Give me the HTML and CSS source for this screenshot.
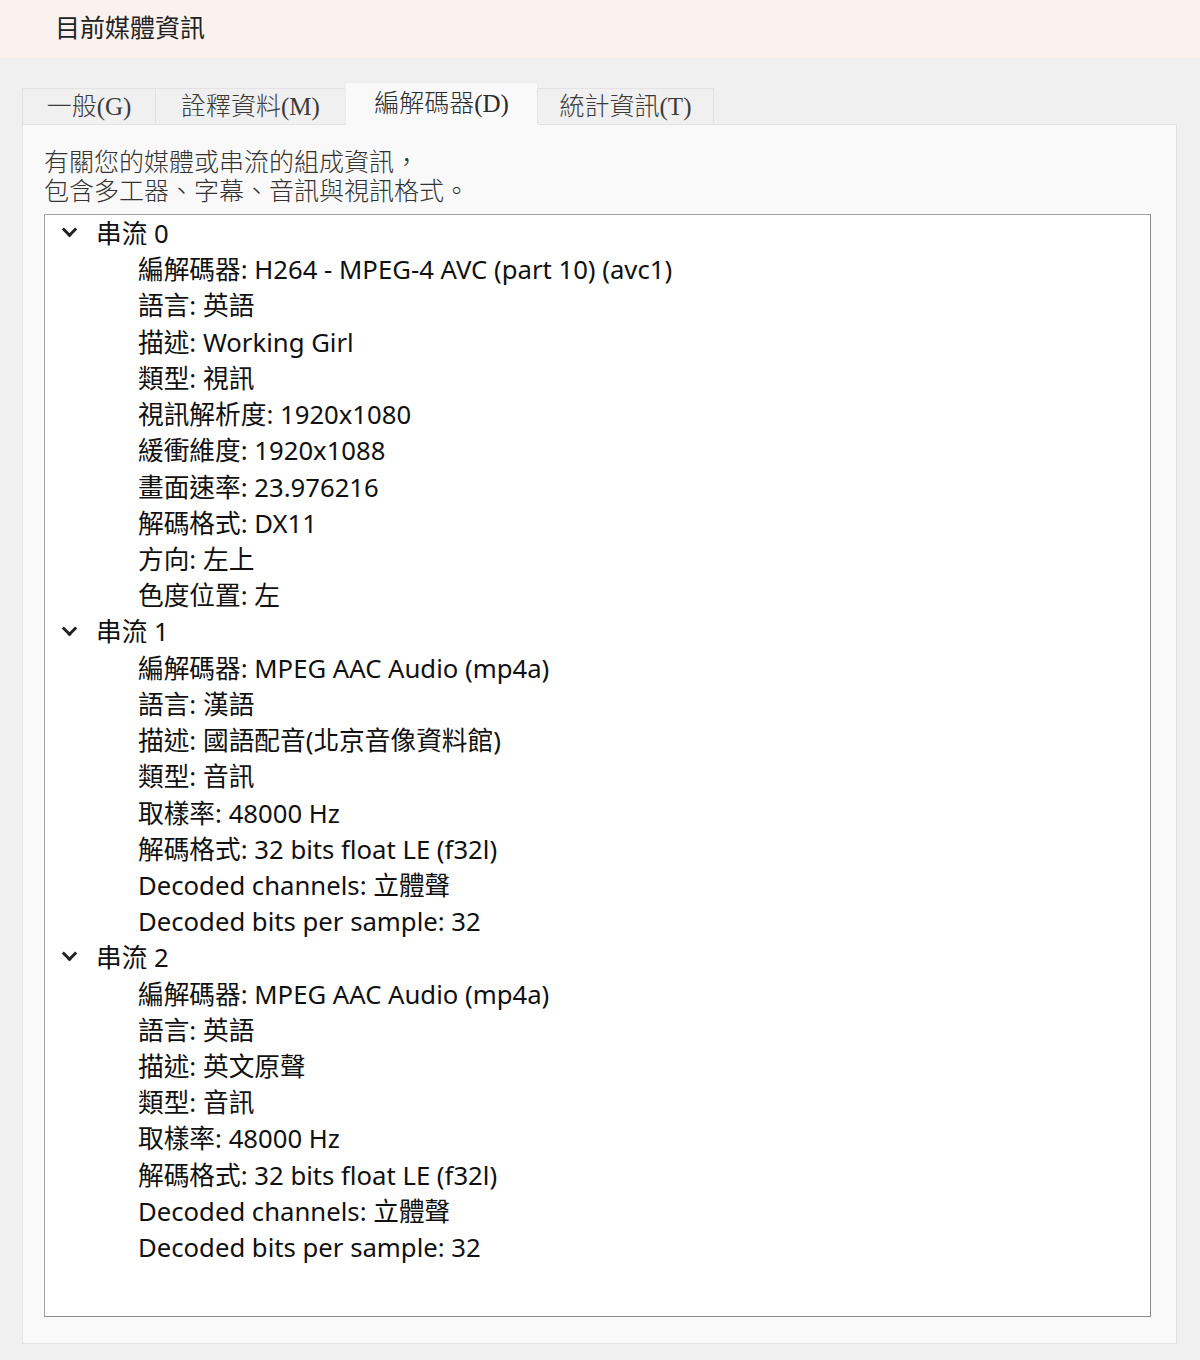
FILE: index.html
```html
<!DOCTYPE html>
<html lang="zh-Hant">

<head>
    <meta charset="UTF-8">
    <meta name="viewport" content="width=device-width, initial-scale=1.0">
    <title>目前媒體資訊</title>
    <link rel="stylesheet" href="styles.css">
</head>

<body>
    <div class="header">目前媒體資訊</div>

    <div class="dialog">
        <ul class="tabs">
            <li class="tab-g">一般(G)</li>
            <li class="tab-m">詮釋資料(M)</li>
            <li class="tab-d active">編解碼器(D)</li>
            <li class="tab-t">統計資訊(T)</li>
        </ul>

        <div class="panel">
            <p class="desc">有關您的媒體或串流的組成資訊，<br>包含多工器、字幕、音訊與視訊格式。</p>

            <div class="tree">
                <ul class="stream">
                    <li class="node"><span class="arrow"></span>串流 0</li>
                    <li>編解碼器: H264 - MPEG-4 AVC (part 10) (avc1)</li>
                    <li>語言: 英語</li>
                    <li>描述: Working Girl</li>
                    <li>類型: 視訊</li>
                    <li>視訊解析度: 1920x1080</li>
                    <li>緩衝維度: 1920x1088</li>
                    <li>畫面速率: 23.976216</li>
                    <li>解碼格式: DX11</li>
                    <li>方向: 左上</li>
                    <li>色度位置: 左</li>
                </ul>
                <ul class="stream">
                    <li class="node"><span class="arrow"></span>串流 1</li>
                    <li>編解碼器: MPEG AAC Audio (mp4a)</li>
                    <li>語言: 漢語</li>
                    <li>描述: 國語配音(北京音像資料館)</li>
                    <li>類型: 音訊</li>
                    <li>取樣率: 48000 Hz</li>
                    <li>解碼格式: 32 bits float LE (f32l)</li>
                    <li>Decoded channels: 立體聲</li>
                    <li>Decoded bits per sample: 32</li>
                </ul>
                <ul class="stream">
                    <li class="node"><span class="arrow"></span>串流 2</li>
                    <li>編解碼器: MPEG AAC Audio (mp4a)</li>
                    <li>語言: 英語</li>
                    <li>描述: 英文原聲</li>
                    <li>類型: 音訊</li>
                    <li>取樣率: 48000 Hz</li>
                    <li>解碼格式: 32 bits float LE (f32l)</li>
                    <li>Decoded channels: 立體聲</li>
                    <li>Decoded bits per sample: 32</li>
                </ul>
            </div>
        </div>
    </div>
</body>

</html>
```

FILE: styles.css
```css
body {
    margin: 0;
    background-color: #f0f0f0;
    font-family: "Noto Sans CJK TC", sans-serif;
    color: #1a1a1a;
}

.header {
    height: 58px;
    line-height: 52px;
    padding-left: 55px;
    background-color: #f9f2ee;
    font-size: 25px;
    color: #222222;
}

.dialog {
    padding: 24px 22px 16px 22px;
}

/* 分頁標籤 */
.tabs {
    list-style: none;
    margin: 0;
    padding: 0;
    display: flex;
    align-items: flex-end;
    height: 42px;
    position: relative;
    z-index: 1;
}

.tabs li {
    height: 36px;
    line-height: 36px;
    box-sizing: border-box;
    border: 1px solid #e3e3e3;
    border-bottom: none;
    margin-left: -1px;
    background-color: #f0f0f0;
    font-family: "Liberation Serif", "Noto Sans CJK TC", serif;
    font-size: 25px;
    font-weight: 300;
    color: #3a3a3a;
    text-align: center;
}

.tabs li:first-child {
    margin-left: 0;
}

.tabs .tab-g { width: 134px; }
.tabs .tab-m { width: 191px; }
.tabs .tab-d { width: 193px; }
.tabs .tab-t { width: 177px; }

.tabs li.active {
    height: 43px;
    line-height: 42px;
    background-color: #f9f9f9;
    border-color: #ececec;
    margin-bottom: -1px;
    color: #2a2a2a;
}

.panel {
    width: 1155px;
    height: 1220px;
    box-sizing: border-box;
    border: 1px solid #e3e3e3;
    background-color: #f9f9f9;
    padding: 21px 25px 0 21px;
}

.desc {
    margin: 0 0 10px 0;
    font-size: 25px;
    line-height: 29px;
    font-weight: 300;
    color: #333333;
}

/* 樹狀清單 */
.tree {
    height: 1103px;
    box-sizing: border-box;
    border: 1px solid #a0a0a0;
    border-right-color: #8a8a8a;
    border-bottom-color: #8a8a8a;
    background-color: #ffffff;
    padding-top: 1px;
}

.stream {
    list-style: none;
    margin: 0;
    padding: 0;
}

.stream li {
    height: 36.22px;
    line-height: 36.22px;
    padding-left: 93px;
    font-family: "Noto Sans", "Noto Sans CJK TC", sans-serif;
    font-size: 25.7px;
    color: #111111;
    white-space: nowrap;
}

.stream li.node {
    padding-left: 15px;
    display: flex;
    align-items: center;
}

.arrow {
    width: 36px;
    height: 20px;
    display: inline-block;
    position: relative;
}

.arrow::before {
    content: "";
    position: absolute;
    left: 4px;
    top: 0;
    width: 8px;
    height: 8px;
    border-right: 3px solid #222222;
    border-bottom: 3px solid #222222;
    transform: rotate(45deg);
}
```
